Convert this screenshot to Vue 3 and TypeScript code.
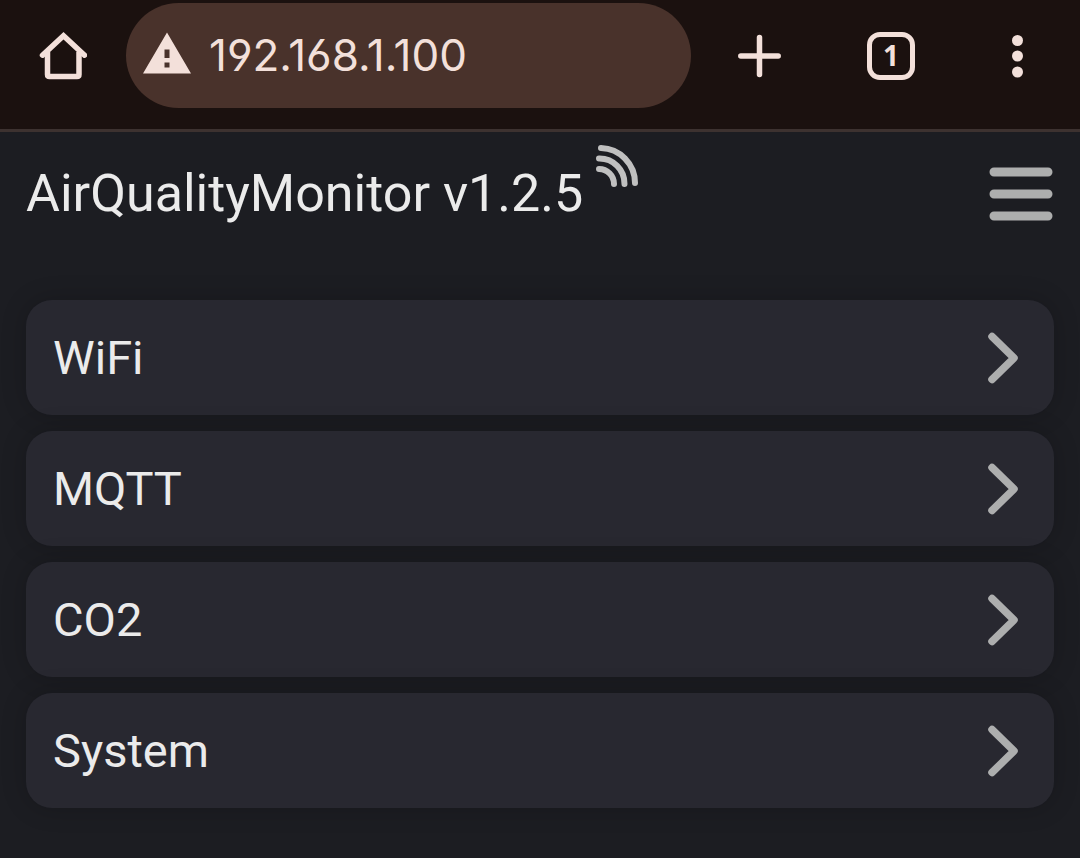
<script setup lang="ts">
import { ref } from 'vue'

interface Section {
  id: string
  label: string
}

const address = ref('192.168.1.100')
const openTabs = ref(1)
const title = 'AirQualityMonitor v1.2.5'

const sections: Section[] = [
  { id: 'wifi', label: 'WiFi' },
  { id: 'mqtt', label: 'MQTT' },
  { id: 'co2', label: 'CO2' },
  { id: 'system', label: 'System' },
]
</script>

<template>
  <div class="screen">
    <header class="toolbar">
      <button class="tool" type="button" aria-label="Home">
        <svg width="48" height="48" viewBox="0 0 48 48" fill="none" stroke="currentColor" stroke-width="5.500">
          <path d="M3.500 23.200L24.500 3.800L45.500 23.200" stroke-linecap="round" />
          <path d="M8.500 20V42.500Q8.500 44.500 10.500 44.500H38Q40 44.500 40 42.500V20" />
        </svg>
      </button>
      <label class="address">
        <svg width="48" height="48" viewBox="0 0 48 48" role="img" aria-label="Not secure">
          <path fill="currentColor" fill-rule="evenodd" d="M24 0.500L48 41.500H0ZM21.500 17.500V26H26.500V17.500ZM21.500 30.500V35.500H26.500V30.500Z" />
        </svg>
        <input v-model="address" type="text" inputmode="url" aria-label="Address" />
      </label>
      <button class="tool" type="button" aria-label="New tab">
        <svg width="48" height="48" viewBox="0 0 48 48" fill="none" stroke="currentColor" stroke-width="5.500" stroke-linecap="round">
          <path d="M5.800 24H43.200M24.500 5.500V42.500" />
        </svg>
      </button>
      <button class="tool" type="button" aria-label="Switch tabs">
        <span class="tabs">{{ openTabs }}</span>
      </button>
      <button class="tool" type="button" aria-label="More options">
        <svg width="48" height="48" viewBox="0 0 48 48" fill="currentColor">
          <circle cx="23.500" cy="8.500" r="5.500" />
          <circle cx="23.500" cy="24" r="5.500" />
          <circle cx="23.500" cy="40" r="5.500" />
        </svg>
      </button>
    </header>

    <main class="page">
      <div class="heading">
        <h1>{{ title }}</h1>
        <svg class="signal" width="44" height="44" viewBox="0 0 44 44" fill="none" stroke="currentColor" stroke-width="6" stroke-linecap="round" role="img" aria-label="Signal strength">
          <path d="M6 4A35 35 0 0 1 40 39" />
          <path d="M4 14.500A25 25 0 0 1 29.500 40" />
          <path d="M4 25A15 15 0 0 1 19 40" />
        </svg>
        <button class="menu" type="button" aria-label="Menu">
          <svg width="64" height="56" viewBox="0 0 64 56" stroke="currentColor" stroke-width="9" stroke-linecap="round">
            <path d="M5 6H59M5 28H59M5 50H59" />
          </svg>
        </button>
      </div>

      <nav class="sections" aria-label="Settings">
        <button v-for="section in sections" :key="section.id" class="card" type="button">
          <span>{{ section.label }}</span>
          <svg width="32" height="52" viewBox="0 0 32 52" fill="none" stroke="currentColor" stroke-width="7.500" stroke-linecap="round" stroke-linejoin="round">
            <path d="M5 4.500L27 26L5 47.500" />
          </svg>
        </button>
      </nav>
    </main>
  </div>
</template>

<style>
body {
  background: #1c1d22;
}
</style>

<style scoped>
.screen {
  min-height: 100vh;
  background: #1c1d22;
  color: #ebebeb;
  font-family: Roboto, sans-serif;
}

button {
  margin: 0;
  padding: 0;
  border: 0;
  background: none;
  color: inherit;
  font: inherit;
  cursor: pointer;
}

svg {
  display: block;
  flex: none;
}

.toolbar {
  display: grid;
  grid-template-columns: 126px minmax(0, 1fr) 136px 128px 125px;
  padding: 3px 0 21px;
  border-bottom: 3px solid #3d3230;
  background: #1b110f;
  color: #f3e0da;
}

.tool {
  display: flex;
  align-items: center;
  justify-content: center;
}

.address {
  display: flex;
  align-items: center;
  gap: 18px;
  height: 105px;
  padding: 0 17px;
  border-radius: 53px;
  background: #49322b;
}

.address input {
  flex: 1;
  min-width: 0;
  padding: 0 0 2px;
  border: 0;
  outline: 0;
  background: none;
  color: inherit;
  font-family: Inter, sans-serif;
  font-size: 44px;
  font-feature-settings: "ss01";
  line-height: 56px;
}

.tabs {
  box-sizing: border-box;
  width: 48px;
  height: 48px;
  border: 5px solid currentColor;
  border-radius: 13px;
  font-family: "Open Sans", sans-serif;
  font-size: 28px;
  font-weight: 700;
  line-height: 36px;
  text-align: center;
}

.page {
  padding: 0 26px 48px;
}

.heading {
  display: flex;
  align-items: flex-start;
  padding: 12px 1px 75px 0;
}

h1 {
  margin: 0;
  padding-top: 19px;
  font-size: 52px;
  font-weight: 400;
  line-height: 62px;
  white-space: nowrap;
}

.signal {
  margin-left: 12px;
  color: #c0c0c0;
}

.menu {
  margin: 22px 0 0 auto;
  color: #adaeae;
}

.sections {
  display: grid;
  gap: 16px;
}

.card {
  display: flex;
  align-items: center;
  justify-content: space-between;
  height: 115px;
  padding: 0 35px 0 27px;
  border-radius: 26px;
  background: #282830;
  box-shadow: 0 0 26px rgba(0, 0, 0, 0.2);
  font-size: 47px;
  line-height: 56px;
}

.card svg {
  color: #adaeae;
}
</style>
